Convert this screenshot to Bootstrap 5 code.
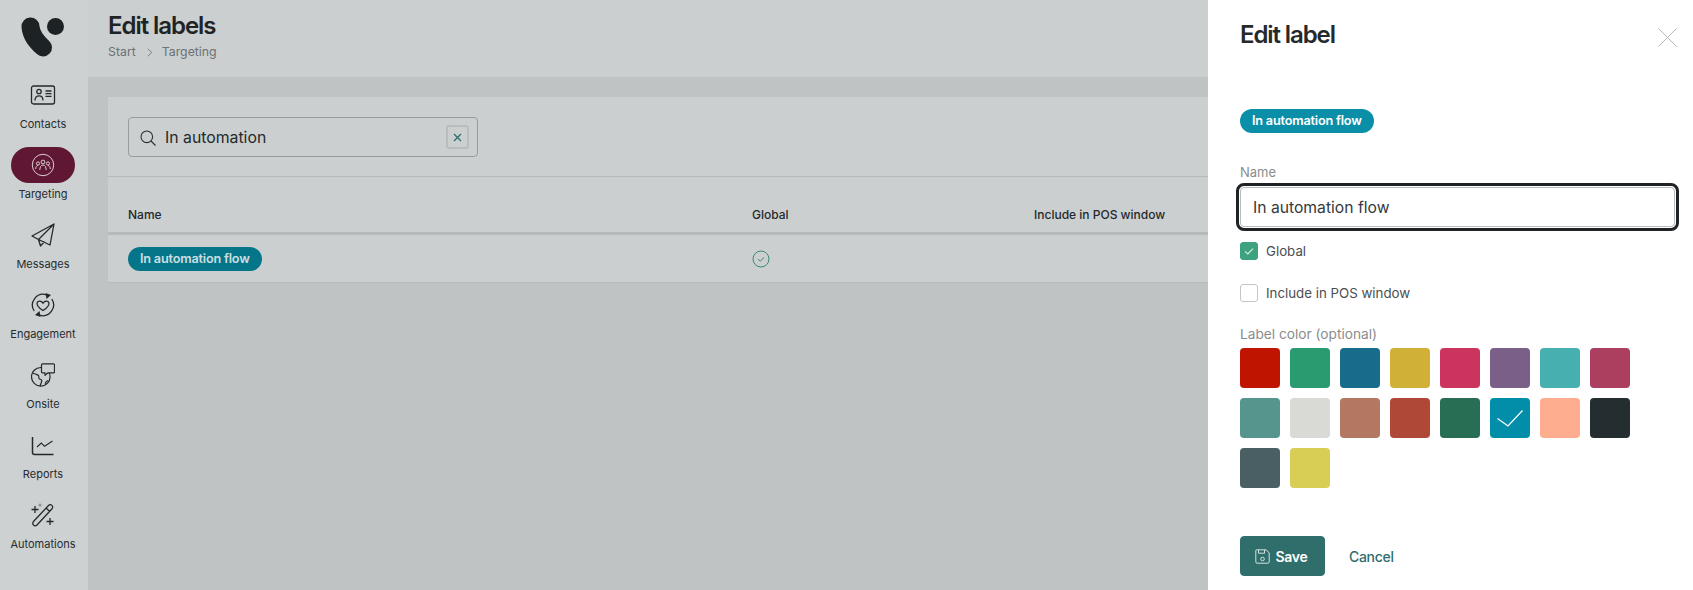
<!DOCTYPE html>
<html lang="en">
<head>
    <meta charset="UTF-8">
    <meta name="viewport" content="width=device-width, initial-scale=1.0">
    <title>Edit labels</title>
    <link href="https://cdn.jsdelivr.net/npm/bootstrap@5.3.0/dist/css/bootstrap.min.css" rel="stylesheet">
    <style>
        html, body { height: 100%; }
        body { font-family: Inter, "Liberation Sans", sans-serif; background: #bfc3c3; color: #24292b; overflow: hidden; }
        .app-shell { height: 590px; }

        .side-rail { width: 88px; background: #cdd1d2; padding-right: 2px; }
        .rail-logo { height: 77px; }
        .rail-item { height: 70px; color: #262c2f; font-size: 11px; line-height: 16px; text-decoration: none; }
        .rail-icon { width: 64px; height: 36px; border-radius: 18px; }
        .rail-icon.is-active { background: #5f1733; }
        .rail-text { margin-top: 3px; }

        .main-area { min-width: 0; overflow: hidden; }
        .top-head { height: 77px; background: #cbcfd0; padding: 11px 0 0 20px; }
        .page-title { font-size: 24px; line-height: 30px; font-weight: 600; letter-spacing: -1.05px; margin: 0; color: #1e2325; }
        .crumbs { font-size: 12.3px; line-height: 18px; color: #6c7172; margin-top: 2px; }
        .crumbs svg { margin: 0 9px 0 11px; }

        .label-sheet { background: #cbcfd0; margin: 20px 0 0 20px; border-bottom: 1px solid #b6baba; }
        .search-row { height: 80px; padding: 20px 20px 0; border-bottom: 1px solid #b4b9b9; }
        .search-box { width: 350px; height: 40px; border: 1px solid #979c9c; border-radius: 4px; padding: 1px 8px 0 11px; font-size: 15.8px; }
        .search-box span { margin-left: 9px; }
        .clear-btn { width: 23px; height: 24px; border: 2px solid #b8bebe; border-radius: 3px; margin-top: -1px; }

        .label-table { --bs-table-bg: transparent; --bs-table-color: #24292b; margin: 0; table-layout: fixed; width: 1100px; font-size: 12px; }
        .label-table th { height: 56px; font-weight: 500; vertical-align: bottom; padding: 0 0 8px 0; border-bottom: 3px solid #b6baba; }
        .label-table td { height: 49px; padding: 1px 0 0; vertical-align: middle; border: 0; }
        .label-table .first-col { width: 644px; padding-left: 20px; }
        .label-table .second-col { width: 282px; }

        .tag-pill { font-size: 12.7px; line-height: 18px; font-weight: 600; color: #fff; padding: 3px 12px; border-radius: 12px; letter-spacing: -0.2px; }
        .tag-pill.is-dim { background: #057689; color: #cbdfe3; }
        .tag-pill.is-bright { background: #0b8fa8; }

        .edit-panel { width: 485px; background: #fff; padding: 0 18px 0 32px; }
        .panel-title { font-size: 24px; line-height: 30px; font-weight: 600; letter-spacing: -1.1px; margin: 0; color: #25292b; padding-top: 20px; }
        .close-mark { top: 28px; right: 16px; }
        .tag-holder { margin-top: 57px; height: 24px; }
        .field-caption { font-size: 13px; line-height: 18px; color: #8a8d8b; margin: 0; }
        .name-caption { margin-top: 32px; }
        .color-caption { font-size: 13.7px; margin-top: 23px; }
        .name-input { height: 40px; margin-top: 6px; border: 1px solid #b9bcbc; border-radius: 4px; font-size: 15.7px; color: #34393b; padding: 0 12px; outline: 3px solid #1f2325; outline-offset: 1px; box-shadow: none !important; }
        .name-input:focus { border-color: #b9bcbc; outline: 3px solid #1f2325; outline-offset: 1px; }
        .tick-row { font-size: 13.3px; line-height: 18px; color: #4a4e4f; margin: 0; padding: 0; min-height: 18px; }
        .tick-first { margin-top: 15px; }
        .tick-second { margin-top: 24px; }
        .tick-row .form-check-input { width: 18px; height: 18px; margin: 0 8px 0 0; border-radius: 3px; border: 1px solid #c3c6c6; float: none; }
        .tick-row .form-check-input:checked { background-color: #3fa27f; border-color: #3fa27f; background-image: url("data:image/svg+xml,%3csvg xmlns='http://www.w3.org/2000/svg' viewBox='0 0 18 18'%3e%3cpath fill='none' stroke='%23d6efe5' stroke-width='1.2' d='M4.5 9.5l3.2 2.8 5.800-6'/%3e%3c/svg%3e"); }

        .swatch-grid { display: grid; grid-template-columns: repeat(8, 40px); grid-auto-rows: 40px; gap: 10px; margin-top: 5px; }
        .swatch { border-radius: 4px; }
        .panel-actions { margin-top: 48px; }
        .save-btn { --bs-btn-bg: #306e6c; --bs-btn-border-color: #306e6c; --bs-btn-color: #fff; width: 85px; height: 40px; font-size: 14px; font-weight: 600; border-radius: 4px; letter-spacing: -0.3px; padding: 0 3px 0 0; gap: 6px; }
        .cancel-link { font-size: 14px; font-weight: 500; color: #306e6c; text-decoration: none; margin-left: 24px; letter-spacing: -0.3px; }
    </style>
</head>
<body>
    <div class="app-shell d-flex">
        <!-- left rail -->
        <nav class="side-rail flex-shrink-0 d-flex flex-column align-items-center">
            <div class="rail-logo w-100 d-flex justify-content-center">
                <svg width="86" height="77" viewBox="0 0 86 77">
                    <path d="M30.500 26.500C31 35 36 41 43 47.500" fill="none" stroke="#1d2224" stroke-width="18" stroke-linecap="round"/>
                    <circle cx="55.500" cy="26.500" r="8.500" fill="#1d2224"/>
                </svg>
            </div>

            <a class="rail-item d-flex flex-column align-items-center" href="#">
                <div class="rail-icon d-flex align-items-center justify-content-center">
                    <svg width="26" height="22" viewBox="0 0 26 22" fill="none" stroke="#23292c" stroke-width="1.300">
                        <rect x="1.500" y="2" width="23" height="18" rx="2"/>
                        <circle cx="9" cy="7.500" r="2.200"/>
                        <path d="M5 16.500c0-3 1.700-4.700 4-4.700s4 1.700 4 4.700M15.500 7h6M15.500 9.700h6M15.500 12.400h6"/>
                    </svg>
                </div>
                <div class="rail-text">Contacts</div>
            </a>

            <a class="rail-item d-flex flex-column align-items-center" href="#">
                <div class="rail-icon is-active d-flex align-items-center justify-content-center">
                    <svg width="24" height="24" viewBox="0 0 24 24" fill="none" stroke="#dccdd3" stroke-width="1">
                        <circle cx="12" cy="12" r="10.700"/>
                        <circle cx="7" cy="10.500" r="1.600"/>
                        <circle cx="12" cy="9" r="1.900"/>
                        <circle cx="17" cy="10.500" r="1.600"/>
                        <path d="M4.700 16c0-2 .9-3.500 2.300-3.500M19.300 16c0-2-.9-3.500-2.300-3.500M8.800 17c0-3 1.300-5 3.200-5s3.200 2 3.200 5"/>
                    </svg>
                </div>
                <div class="rail-text">Targeting</div>
            </a>

            <a class="rail-item d-flex flex-column align-items-center" href="#">
                <div class="rail-icon d-flex align-items-center justify-content-center">
                    <svg width="24" height="24" viewBox="0 0 24 24" fill="none" stroke="#23292c" stroke-width="1.300" stroke-linejoin="round">
                        <path d="M23 1L1 13l6.500 3.500L19 22zM23 1L7.500 16.500 9.500 23l4-4.500"/>
                    </svg>
                </div>
                <div class="rail-text">Messages</div>
            </a>

            <a class="rail-item d-flex flex-column align-items-center" href="#">
                <div class="rail-icon d-flex align-items-center justify-content-center">
                    <svg width="24" height="24" viewBox="0 0 24 24" fill="none" stroke="#23292c" stroke-width="1.300">
                        <path d="M15.500 1.800A10.800 10.800 0 0 0 3.200 18M8.500 22.200A10.800 10.800 0 0 0 20.800 6"/>
                        <path d="M14.500 0l5.500 2-4.500 4zM9.500 24L4 22l4.500-4z" fill="#23292c" stroke="none"/>
                        <path d="M12 17.500c-6-3.800-6.500-6.300-5.800-8 .8-1.800 4-2 5.800.6 1.800-2.600 5-2.400 5.800-.6.700 1.700.2 4.200-5.800 8z"/>
                    </svg>
                </div>
                <div class="rail-text">Engagement</div>
            </a>

            <a class="rail-item d-flex flex-column align-items-center" href="#">
                <div class="rail-icon d-flex align-items-center justify-content-center">
                    <svg width="24" height="24" viewBox="0 0 24 24" fill="none" stroke="#23292c" stroke-width="1.200" stroke-linejoin="round">
                        <circle cx="9.800" cy="13.800" r="9.300"/>
                        <path d="M1.500 10.500c3 0 4 1 6 2 1 1.500-.5 2.500 1 3.500 2 .5 3 1.500 2 3l-1.500 4M14.500 22c-.5-2 .5-3.500 2.500-4.500"/>
                        <path d="M11.500.800h11a1 1 0 0 1 1 1v7a1 1 0 0 1-1 1h-5.500l-3 2.500V9.800h-2.500a1 1 0 0 1-1-1v-7a1 1 0 0 1 1-1z" fill="#cdd1d2"/>
                    </svg>
                </div>
                <div class="rail-text">Onsite</div>
            </a>

            <a class="rail-item d-flex flex-column align-items-center" href="#">
                <div class="rail-icon d-flex align-items-center justify-content-center">
                    <svg width="24" height="24" viewBox="0 0 24 24" fill="none" stroke="#23292c" stroke-width="1.500">
                        <path d="M1.500 4v15.500a2 2 0 0 0 2 2h19"/>
                        <path d="M6 14l4.300-4 3.300 3.300L21.500 8" stroke-width="1.100"/>
                    </svg>
                </div>
                <div class="rail-text">Reports</div>
            </a>

            <a class="rail-item d-flex flex-column align-items-center" href="#">
                <div class="rail-icon d-flex align-items-center justify-content-center">
                    <svg width="24" height="24" viewBox="0 0 24 24" fill="none" stroke="#23292c" stroke-width="1.300">
                        <path d="M2.500 18.500L17.500 2.500a2.400 2.400 0 0 1 3.500 3.300L6 22a2.400 2.400 0 0 1-3.500-3.500zM15 5l3.500 3.300"/>
                        <path d="M.5 6.500h7M4 3v7M15.500 18.500h7M19 15v7"/>
                        <circle cx="9" cy="2" r="1.600" fill="#8f9495" stroke="none"/>
                    </svg>
                </div>
                <div class="rail-text">Automations</div>
            </a>
        </nav>

        <!-- list of labels -->
        <main class="main-area flex-grow-1">
            <header class="top-head">
                <h1 class="page-title">Edit labels</h1>
                <div class="crumbs d-flex align-items-center">
                    <span>Start</span>
                    <svg width="6" height="9" viewBox="0 0 6 9" fill="none" stroke="#7a7f80"><path d="M.8.800l4 3.700-4 3.700"/></svg>
                    <span>Targeting</span>
                </div>
            </header>

            <section class="label-sheet">
                <div class="search-row">
                    <div class="search-box d-flex align-items-center">
                        <svg width="16" height="16" viewBox="0 0 16 16" fill="none" stroke="#2a2f31" stroke-width="1.100"><circle cx="6.800" cy="6.800" r="5.800"/><path d="M11 11l4.500 4.500"/></svg>
                        <span class="flex-grow-1">In automation</span>
                        <div class="clear-btn d-flex align-items-center justify-content-center">
                            <svg width="9" height="9" viewBox="0 0 9 9" fill="none" stroke="#2f6e6a" stroke-width="1.300"><path d="M1 1l7 7M8 1L1 8"/></svg>
                        </div>
                    </div>
                </div>
                <table class="table label-table">
                    <thead>
                        <tr>
                            <th class="first-col">Name</th>
                            <th class="second-col">Global</th>
                            <th>Include in POS window</th>
                        </tr>
                    </thead>
                    <tbody>
                        <tr>
                            <td class="first-col"><span class="tag-pill is-dim d-inline-block">In automation flow</span></td>
                            <td>
                                <svg class="d-block" width="18" height="18" viewBox="0 0 18 18" fill="none" stroke="#3c8a70"><circle cx="9" cy="9" r="8"/><path d="M6 9.200l2.200 2 3.800-3.700"/></svg>
                            </td>
                            <td></td>
                        </tr>
                    </tbody>
                </table>
            </section>
        </main>

        <!-- edit panel -->
        <aside class="edit-panel flex-shrink-0 position-relative">
            <h2 class="panel-title">Edit label</h2>
            <svg class="close-mark position-absolute" width="19" height="19" viewBox="0 0 19 19" fill="none" stroke="#b5b8b8"><path d="M.5.500l18 18M18.500.500l-18 18"/></svg>

            <div class="tag-holder"><span class="tag-pill is-bright d-inline-block">In automation flow</span></div>

            <p class="field-caption name-caption">Name</p>
            <input class="form-control name-input" type="text" value="In automation flow">

            <label class="tick-row tick-first d-flex align-items-center">
                <input class="form-check-input" type="checkbox" checked>Global
            </label>
            <label class="tick-row tick-second d-flex align-items-center">
                <input class="form-check-input" type="checkbox">Include in POS window
            </label>

            <p class="field-caption color-caption">Label color (optional)</p>
            <div class="swatch-grid">
                <div class="swatch" style="background:#bf1500"></div>
                <div class="swatch" style="background:#2a9a71"></div>
                <div class="swatch" style="background:#196b8b"></div>
                <div class="swatch" style="background:#d1b037"></div>
                <div class="swatch" style="background:#cc345f"></div>
                <div class="swatch" style="background:#7a6089"></div>
                <div class="swatch" style="background:#48afb0"></div>
                <div class="swatch" style="background:#ac3e5f"></div>
                <div class="swatch" style="background:#56958e"></div>
                <div class="swatch" style="background:#d9dad5"></div>
                <div class="swatch" style="background:#b47761"></div>
                <div class="swatch" style="background:#b04837"></div>
                <div class="swatch" style="background:#276e54"></div>
                <div class="swatch d-flex align-items-center justify-content-center" style="background:#028da8">
                    <svg width="26" height="17" viewBox="0 0 26 17" fill="none" stroke="#fff" stroke-width="1.200"><path d="M.5 8.500l10.500 7.500L25.500 .5"/></svg>
                </div>
                <div class="swatch" style="background:#ffad8f"></div>
                <div class="swatch" style="background:#242d30"></div>
                <div class="swatch" style="background:#4a5f64"></div>
                <div class="swatch" style="background:#d8ce56"></div>
            </div>

            <div class="panel-actions d-flex align-items-center">
                <button class="btn save-btn d-flex align-items-center justify-content-center" type="button">
                    <svg width="15" height="15" viewBox="0 0 15 15" fill="none" stroke="#d3e2e1"><path d="M1.500.800h9.500l3.200 3v9a1.400 1.400 0 0 1-1.400 1.400H2A1.400 1.400 0 0 1 .8 12.800V1.500a.7.7 0 0 1 .7-.7zM3.500.800v3.400h6V.800"/><circle cx="7.500" cy="10" r="1.800"/></svg>
                    Save
                </button>
                <a class="cancel-link" href="#">Cancel</a>
            </div>
        </aside>
    </div>

    <script src="https://cdn.jsdelivr.net/npm/bootstrap@5.3.0/dist/js/bootstrap.bundle.min.js"></script>
</body>
</html>
